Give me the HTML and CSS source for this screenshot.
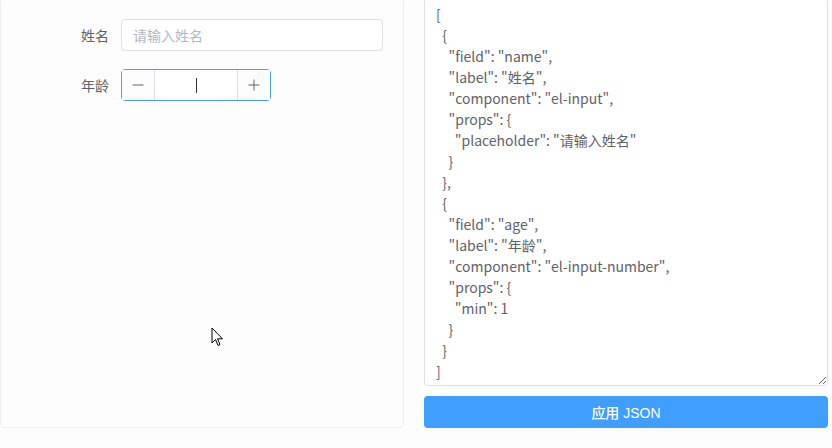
FILE: index.html
```html
<!DOCTYPE html>
<html lang="zh-CN">
<head>
  <meta charset="UTF-8">
  <meta name="viewport" content="width=device-width, initial-scale=1.0">
  <title>JSON 表单</title>
  <link rel="stylesheet" href="styles.css">
</head>
<body>
  <div class="container">
    <!-- form preview -->
    <div class="form-card">
      <div class="form-item">
        <label class="form-label">姓名</label>
        <div class="text-input">
          <span class="placeholder">请输入姓名</span>
        </div>
      </div>
      <div class="form-item">
        <label class="form-label">年龄</label>
        <div class="number-input">
          <span class="num-btn">
            <svg width="12" height="12" viewBox="0 0 12 12"><path d="M0.5 6h11" stroke="#606266" stroke-width="1"/></svg>
          </span>
          <span class="num-value"><span class="caret"></span></span>
          <span class="num-btn">
            <svg width="12" height="12" viewBox="0 0 12 12"><path d="M0.5 6h11M6 0.5v11" stroke="#606266" stroke-width="1"/></svg>
          </span>
        </div>
      </div>
      <svg class="mouse" width="13" height="20" viewBox="0 0 13 20">
        <path d="M1 1v15l3.5-3.5 2.5 6 2-0.9-2.5-5.8h5z" fill="#fff" stroke="#000" stroke-width="1" stroke-linejoin="miter"/>
      </svg>
    </div>

    <!-- json editor -->
    <div class="editor">
      <textarea class="json-text" spellcheck="false">[
  {
    "field": "name",
    "label": "姓名",
    "component": "el-input",
    "props": {
      "placeholder": "请输入姓名"
    }
  },
  {
    "field": "age",
    "label": "年龄",
    "component": "el-input-number",
    "props": {
      "min": 1
    }
  }
]</textarea>
      <button class="apply-button">应用 JSON</button>
    </div>
  </div>
</body>
</html>
```

FILE: styles.css
```css
/* Global */
* {
  box-sizing: border-box;
}

body {
  margin: 0;
  background-color: #fdfdfd;
  color: #606266;
  font-family: "Noto Sans CJK SC", "Noto Sans", sans-serif;
  font-size: 14px;
}

.container {
  display: grid;
  grid-template-columns: 404px 404px;
  gap: 20px;
  margin-top: -2px;
  height: 430px;
}

/* form preview card */
.form-card {
  position: relative;
  background-color: #fdfdfd;
  border: 1px solid #ebeef5;
  border-radius: 4px;
  padding: 20px;
}

.form-item {
  display: flex;
  align-items: center;
  margin-bottom: 18px;
}

.form-label {
  width: 100px;
  padding-right: 12px;
  text-align: right;
  line-height: 32px;
  color: #606266;
}

.text-input {
  flex: 1;
  height: 32px;
  border: 1px solid #dcdfe6;
  border-radius: 4px;
  padding: 0 11px;
  display: flex;
  align-items: center;
  background: #fff;
}

.placeholder {
  color: #b4b8bf;
}

.number-input {
  width: 150px;
  height: 32px;
  border: 1px solid #4f9fe6;
  border-radius: 4px;
  display: flex;
  background: #fff;
}

.num-btn {
  width: 33px;
  display: flex;
  align-items: center;
  justify-content: center;
  background: #fcfcfc;
}

.num-btn:first-child {
  border-right: 1px solid #dcdfe6;
}

.num-btn:last-child {
  border-left: 1px solid #dcdfe6;
}

.num-value {
  flex: 1;
  display: flex;
  align-items: center;
  justify-content: center;
}

.caret {
  width: 1px;
  height: 15px;
  background: #303133;
}

.mouse {
  position: absolute;
  left: 210px;
  top: 328px;
}

/* json editor */
.editor {
  display: flex;
  flex-direction: column;
  gap: 10px;
}

.json-text {
  flex: 1;
  width: 100%;
  margin: 0;
  padding: 5px 11px;
  border: 1px solid #dcdfe6;
  border-radius: 4px;
  background: #fff;
  color: #606266;
  font-family: "Noto Sans CJK SC", sans-serif;
  font-size: 14px;
  line-height: 21px;
  overflow: hidden;
  outline: none;
}

.apply-button {
  height: 32px;
  border: none;
  border-radius: 4px;
  background: #409eff;
  color: #fff;
  font-family: "Liberation Sans", "Noto Sans CJK SC", sans-serif;
  font-size: 14px;
  font-weight: 500;
  cursor: pointer;
}
```
